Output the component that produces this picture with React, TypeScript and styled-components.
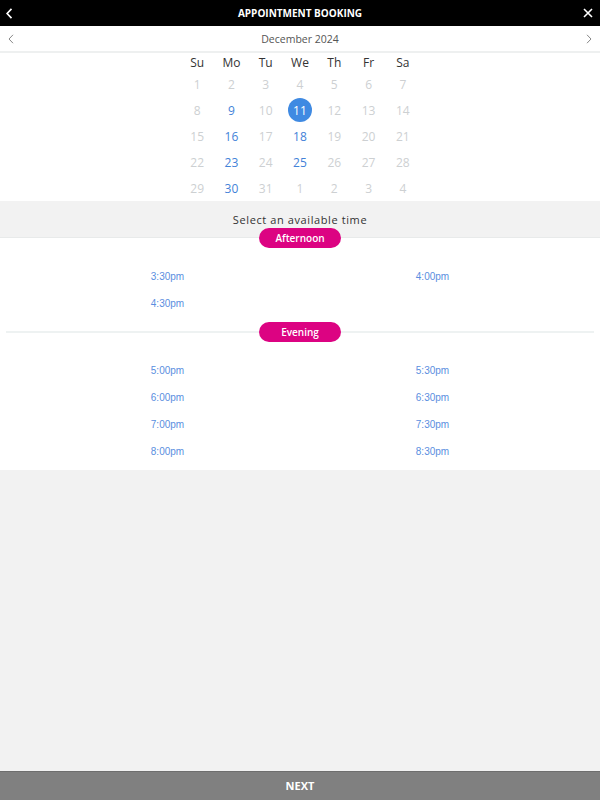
import React from "react";
import styled, { createGlobalStyle } from "styled-components";

const Global = createGlobalStyle`
  html, body { margin: 0; padding: 0; }
  body { background: #f2f2f2; font-family: "Open Sans", "Liberation Sans", sans-serif; }
  * { box-sizing: border-box; }
`;

const Page = styled.div`
  min-height: 100vh;
  display: flex;
  flex-direction: column;
  background: #f2f2f2;
`;

const TopBar = styled.header`
  height: 26px;
  background: #000;
  color: #fff;
  display: grid;
  grid-template-columns: 40px 1fr 40px;
  align-items: center;
`;

const Title = styled.div`
  text-align: center;
  font-weight: 700;
  font-size: 10px;
`;

const IconBtn = styled.div<{ $align: "left" | "right"; $pad: number }>`
  display: flex;
  justify-content: ${(p) => (p.$align === "left" ? "flex-start" : "flex-end")};
  padding: 0 ${(p) => p.$pad}px;
  align-items: center;
`;

const Calendar = styled.section`
  background: #fff;
`;

const MonthNav = styled.div`
  height: 27px;
  display: grid;
  grid-template-columns: 40px 1fr 40px;
  align-items: center;
  border-bottom: 2px solid #eef0f0;
`;

const MonthLabel = styled.div`
  text-align: center;
  font-size: 10.5px;
  color: #555;
`;

const Grid = styled.div`
  width: 240px;
  margin: 0 auto;
  display: grid;
  grid-template-columns: repeat(7, 1fr);
`;

const Dow = styled.div`
  height: 18px;
  display: flex;
  align-items: center;
  justify-content: center;
  font-size: 12px;
  color: #333;
`;

const DayCell = styled.div`
  height: 26px;
  display: flex;
  align-items: center;
  justify-content: center;
`;

const Day = styled.span<{ $state: "off" | "on" | "sel" }>`
  width: 24px;
  height: 24px;
  border-radius: 50%;
  display: flex;
  align-items: center;
  justify-content: center;
  font-size: 12px;
  color: ${(p) => (p.$state === "off" ? "#cdd0d2" : p.$state === "on" ? "#4382d8" : "#fff")};
  background: ${(p) => (p.$state === "sel" ? "#3f8ae2" : "transparent")};
`;

const Prompt = styled.div`
  height: 37px;
  background: #f2f2f2;
  border-bottom: 1px solid #e8eaea;
  display: flex;
  align-items: center;
  justify-content: center;
  font-size: 11px;
  color: #333;
  letter-spacing: 0.6px;
  padding-top: 1px;
`;

const Times = styled.section`
  background: #fff;
`;

const Divider = styled.div<{ $lined: boolean; $overlap: number }>`
  position: relative;
  height: 20px;
  margin-top: ${(p) => -p.$overlap}px;
  display: flex;
  justify-content: center;
  &::before {
    content: "";
    display: ${(p) => (p.$lined ? "block" : "none")};
    position: absolute;
    left: 6px;
    right: 6px;
    top: 9px;
    height: 2px;
    background: #eef2f2;
  }
`;

const Pill = styled.span`
  position: relative;
  width: 82px;
  height: 20px;
  border-radius: 10px;
  background: #dc0382;
  color: #fff;
  font-size: 10px;
  font-weight: 600;
  display: flex;
  align-items: center;
  justify-content: center;
`;

const Slots = styled.div`
  width: 530px;
  margin: 0 auto;
  padding: 15px 0 5px;
  display: grid;
  grid-template-columns: 1fr 1fr;
`;

const Slot = styled.div`
  height: 27px;
  display: flex;
  align-items: center;
  justify-content: center;
  font-family: "Liberation Sans", Arial, sans-serif;
  font-size: 10px;
  color: #5a8ee0;
`;

const Spacer = styled.div`
  flex: 1;
`;

const Footer = styled.footer`
  height: 29px;
  background: #808080;
  border-top: 1px solid #6e6e6e;
  display: flex;
  align-items: center;
  justify-content: center;
  color: #fff;
  font-weight: 700;
  font-size: 11px;
  padding-bottom: 2px;
`;

const Chevron = ({ dir, color, w = 1.2, size = 10 }: { dir: "l" | "r"; color: string; w?: number; size?: number }) => (
  <svg width={size * 0.6} height={size} viewBox="0 0 6 10">
    <path
      d={dir === "l" ? "M5 0.8 L1 5 L5 9.2" : "M1 0.8 L5 5 L1 9.2"}
      fill="none"
      stroke={color}
      strokeWidth={w}
    />
  </svg>
);

const Close = () => (
  <svg width="10" height="10" viewBox="0 0 10 10">
    <path d="M1 1 L9 9 M9 1 L1 9" stroke="#fff" strokeWidth="1.6" fill="none" />
  </svg>
);

type Cell = { n: number; s: "off" | "on" | "sel" };
const days: Cell[] = [];
for (let i = 1; i <= 31; i++) {
  const on = [9, 16, 18, 23, 25, 30].includes(i);
  days.push({ n: i, s: i === 11 ? "sel" : on ? "on" : "off" });
}
for (let i = 1; i <= 4; i++) days.push({ n: i, s: "off" });

const afternoon = ["3:30pm", "4:00pm", "4:30pm"];
const evening = ["5:00pm", "5:30pm", "6:00pm", "6:30pm", "7:00pm", "7:30pm", "8:00pm", "8:30pm"];

export default function App() {
  return (
    <Page>
      <Global />
      <TopBar>
        <IconBtn $align="left" $pad={6}>
          <Chevron dir="l" color="#fff" w={1.5} size={11} />
        </IconBtn>
        <Title>APPOINTMENT BOOKING</Title>
        <IconBtn $align="right" $pad={7}>
          <Close />
        </IconBtn>
      </TopBar>
      <Calendar>
        <MonthNav>
          <IconBtn $align="left" $pad={8}>
            <Chevron dir="l" color="#888" w={1} />
          </IconBtn>
          <MonthLabel>December 2024</MonthLabel>
          <IconBtn $align="right" $pad={8}>
            <Chevron dir="r" color="#888" w={1} />
          </IconBtn>
        </MonthNav>
        <Grid>
          {["Su", "Mo", "Tu", "We", "Th", "Fr", "Sa"].map((d) => (
            <Dow key={d}>{d}</Dow>
          ))}
          {days.map((d, i) => (
            <DayCell key={i}>
              <Day $state={d.s}>{d.n}</Day>
            </DayCell>
          ))}
        </Grid>
      </Calendar>
      <Prompt>Select an available time</Prompt>
      <Times>
        <Divider $lined={false} $overlap={10}>
          <Pill>Afternoon</Pill>
        </Divider>
        <Slots>
          {afternoon.map((t) => (
            <Slot key={t}>{t}</Slot>
          ))}
        </Slots>
        <Divider $lined $overlap={0}>
          <Pill>Evening</Pill>
        </Divider>
        <Slots>
          {evening.map((t) => (
            <Slot key={t}>{t}</Slot>
          ))}
        </Slots>
      </Times>
      <Spacer />
      <Footer>NEXT</Footer>
    </Page>
  );
}
